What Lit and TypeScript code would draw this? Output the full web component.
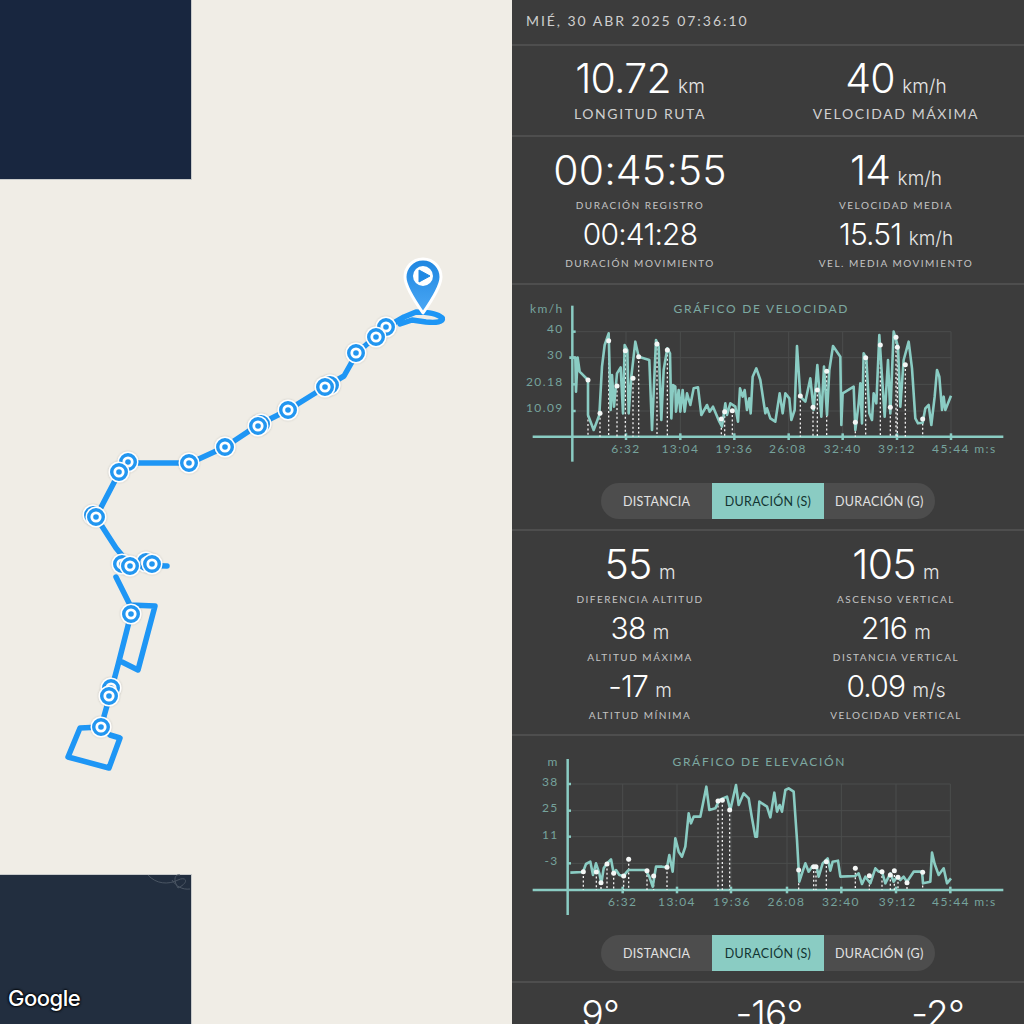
import { LitElement, html, css, svg } from "lit";
import { customElement } from "lit/decorators.js";

type Pt = [number, number];

interface ChartDef {
  title: string;
  titleX: number;
  unit: string;
  unitX: number;
  axisX: number;
  axisY: number;
  yTicks: { label: string; y: number; labelY: number }[];
  labelRight: number;
  xTicks: number[];
  xLabels: { label: string; x: number }[];
  xLabelY: number;
  titleY: number;
  line: Pt[];
  dots: Pt[];
}

// chart points are in 3x crop coordinates, divided by 3 when drawn
const SPEED: ChartDef = {
  title: "GRÁFICO DE VELOCIDAD",
  titleX: 748,
  titleY: 58,
  unit: "km/h",
  unitX: 155,
  axisX: 181,
  axisY: 440,
  labelRight: 155,
  yTicks: [
    { label: "40", y: 125, labelY: 117 },
    { label: "30", y: 203, labelY: 195 },
    { label: "20.18", y: 283, labelY: 275 },
    { label: "10.09", y: 363, labelY: 355 },
  ],
  xTicks: [342, 505, 667, 830, 992, 1155, 1317],
  xLabels: [
    { label: "6:32", x: 342 },
    { label: "13:04", x: 505 },
    { label: "19:36", x: 667 },
    { label: "26:08", x: 828 },
    { label: "32:40", x: 992 },
    { label: "39:12", x: 1155 },
    { label: "45:44 m:s", x: 1357 },
  ],
  xLabelY: 477,
  line: [
    [172, 203], [190, 203], [192, 305], [197, 203], [203, 245], [228, 270], [228, 375], [245, 420], [262, 375],
    [270, 230], [278, 165], [290, 130], [296, 360], [300, 255], [306, 350], [315, 250], [326, 232], [333, 370],
    [338, 165], [346, 180], [350, 370], [358, 260], [370, 155], [380, 200], [412, 210], [420, 420], [432, 150],
    [440, 170], [448, 390], [455, 240], [466, 175], [474, 190], [478, 385], [483, 285], [490, 290], [492, 365],
    [500, 300], [505, 365], [512, 300], [518, 365], [525, 310], [535, 345], [545, 295], [558, 292], [568, 375],
    [585, 345], [593, 365], [603, 350], [622, 395], [630, 410], [640, 340], [645, 375], [655, 340], [670, 350],
    [678, 395], [684, 295], [692, 320], [698, 300], [705, 360], [712, 325], [716, 370], [722, 260], [733, 235],
    [745, 270], [760, 370], [765, 355], [775, 385], [790, 395], [803, 310], [812, 370], [820, 310], [832, 325],
    [838, 390], [848, 360], [855, 168], [865, 320], [880, 335], [895, 265], [905, 360], [916, 225], [928, 380],
    [936, 230], [945, 375], [952, 240], [963, 168], [985, 200], [988, 405], [992, 310], [1025, 290], [1030, 420],
    [1040, 340], [1045, 280], [1050, 400], [1055, 190], [1063, 205], [1072, 370], [1080, 390], [1085, 310],
    [1093, 340], [1102, 135], [1110, 260], [1118, 380], [1128, 210], [1135, 370], [1145, 125], [1158, 170],
    [1165, 350], [1175, 210], [1190, 155], [1200, 235], [1210, 385], [1218, 400], [1232, 398], [1240, 355],
    [1250, 345], [1258, 405], [1268, 320], [1275, 240], [1282, 260], [1290, 360], [1295, 320], [1300, 360],
    [1317, 317],
  ],
  dots: [
    [228, 270], [264, 370], [290, 152], [315, 288], [340, 182], [363, 265], [380, 200], [435, 162], [466, 180],
    [628, 387], [638, 365], [661, 362], [865, 318], [903, 352], [916, 300], [944, 244], [1030, 397], [1061, 203],
    [1105, 165], [1135, 352], [1152, 142], [1156, 172], [1180, 224], [1232, 387],
  ],
};

const ELEVATION: ChartDef = {
  title: "GRÁFICO DE ELEVACIÓN",
  titleX: 742,
  titleY: 66,
  unit: "m",
  unitX: 140,
  axisX: 167,
  axisY: 450,
  labelRight: 140,
  yTicks: [
    { label: "38", y: 132, labelY: 125 },
    { label: "25", y: 212, labelY: 205 },
    { label: "11", y: 290, labelY: 285 },
    { label: "-3", y: 370, labelY: 363 },
  ],
  xTicks: [332, 495, 657, 825, 988, 1152, 1315],
  xLabels: [
    { label: "6:32", x: 332 },
    { label: "13:04", x: 495 },
    { label: "19:36", x: 660 },
    { label: "26:08", x: 823 },
    { label: "32:40", x: 987 },
    { label: "39:12", x: 1157 },
    { label: "45:44 m:s", x: 1357 },
  ],
  xLabelY: 485,
  line: [
    [175, 398], [213, 396], [222, 372], [235, 365], [243, 405], [252, 370], [262, 400], [268, 430], [275, 385],
    [285, 370], [297, 358], [305, 400], [312, 390], [322, 405], [335, 408], [345, 395], [350, 390], [370, 390],
    [400, 390], [412, 410], [422, 440], [432, 380], [450, 380], [465, 382], [472, 345], [482, 395], [490, 295],
    [500, 335], [510, 350], [520, 320], [530, 220], [537, 250], [545, 230], [565, 230], [583, 140], [592, 210],
    [610, 205], [622, 180], [645, 170], [655, 210], [672, 135], [680, 195], [695, 160], [710, 175], [720, 235],
    [730, 290], [735, 290], [742, 185], [765, 200], [775, 232], [787, 158], [795, 215], [803, 195], [810, 215],
    [820, 150], [830, 145], [845, 155], [855, 300], [862, 425], [870, 400], [880, 370], [890, 395], [900, 380],
    [915, 385], [920, 410], [932, 370], [947, 355], [955, 392], [962, 365], [978, 362], [985, 410], [1030, 408],
    [1040, 400], [1050, 432], [1060, 410], [1075, 430], [1090, 385], [1100, 395], [1110, 395], [1120, 430],
    [1135, 400], [1145, 425], [1155, 410], [1165, 420], [1175, 410], [1185, 425], [1205, 395], [1230, 395],
    [1233, 430], [1255, 425], [1260, 338], [1268, 372], [1280, 405], [1295, 385], [1305, 430], [1317, 415],
  ],
  dots: [
    [214, 395], [253, 396], [267, 428], [285, 372], [305, 400], [335, 408], [350, 358], [405, 392], [425, 408],
    [465, 382], [618, 183], [631, 181], [653, 210], [860, 390], [905, 380], [912, 380], [943, 365], [1030, 385],
    [1072, 407], [1110, 395], [1135, 405], [1147, 392], [1158, 412], [1185, 428], [1232, 397],
  ],
};

const ROUTES = [
  "M442 318 C438 314 428 312 416 312 L404 317 L385 328 L357 353 L344 376 L325 387 L288 410 L258 425 L225 447 L190 463 L128 463",
  "M442 318 C444 322 436 323 426 322 L412 320 L400 324",
  "M128 463 L120 471 L96 517 L116 548 L130 565 L167 566",
  "M116 577 L130 605 L155 606 L138 670 L122 662",
  "M131 614 L118 665 L110 695 L101 727",
  "M101 727 L80 728 L68 757 L109 768 L120 738 L110 735",
];

const MARKERS: Pt[] = [
  [101, 727], [111, 688], [109, 696], [131, 614], [122, 564], [146, 562], [152, 564], [130, 566], [93, 515], [96, 517],
  [128, 462], [119, 472], [189, 463], [225, 447], [261, 424], [258, 426], [288, 410], [330, 385], [325, 387], [356, 353],
  [386, 327], [376, 337],
];

@customElement("app-root")
export class AppRoot extends LitElement {
  static styles = css`
    :host {
      display: flex;
      width: 1024px;
      height: 1024px;
      overflow: hidden;
      background: #3c3c3c;
      font-family: Lato, "Open Sans", sans-serif;
      color: #fff;
    }

    .map {
      position: relative;
      flex: 0 0 512px;
      height: 1024px;
      background: #f0ede6;
    }

    .map svg {
      display: block;
    }

    .google {
      position: absolute;
      left: 8px;
      top: 984px;
      font-family: Inter, sans-serif;
      font-size: 22px;
      line-height: 28px;
      font-weight: 500;
      letter-spacing: -0.5px;
      color: #fff;
      text-shadow: 0 0 2px #000, 0 0 2px #000, 0 0 3px #000;
    }

    .panel {
      flex: 0 0 512px;
      height: 1024px;
      overflow: hidden;
      background: #3c3c3c;
    }

    .date {
      height: 44px;
      padding: 12px 0 0 14px;
      box-sizing: border-box;
      font-size: 14px;
      line-height: 17px;
      letter-spacing: 1.95px;
      color: #cfcfcf;
    }

    .section {
      border-top: 2px solid #4e4e4e;
    }

    .stats {
      display: grid;
      grid-template-columns: 1fr 1fr;
      align-content: start;
      justify-items: center;
      text-align: center;
    }

    .stats-a {
      height: 91px;
      box-sizing: border-box;
      padding-top: 10px;
    }

    .stats-b {
      height: 148px;
      box-sizing: border-box;
      padding-top: 11px;
    }

    .stats-c {
      height: 205px;
      box-sizing: border-box;
      padding-top: 11px;
    }

    .stat {
      display: flex;
      flex-direction: column;
      align-items: center;
    }

    .value {
      display: block;
      height: 44px;
      font-family: Inter, sans-serif;
      font-weight: 300;
      font-size: 41px;
      line-height: 44px;
      letter-spacing: -0.8px;
      white-space: nowrap;
      color: #fff;
    }

    .value small {
      font-size: 19px;
      line-height: 1;
      letter-spacing: 0;
      margin-left: 2px;
      color: #e6e6e6;
    }

    .stat.wide .value {
      letter-spacing: 0.1px;
    }

    .stat.minor .value {
      height: 32px;
      font-size: 30px;
      line-height: 32px;
    }

    .label {
      margin-top: 5px;
      height: 16px;
      font-size: 10px;
      line-height: 16px;
      letter-spacing: 1.5px;
      white-space: nowrap;
      color: #c4c4c4;
    }

    .stat.large-label .label {
      margin-top: 6px;
      font-size: 14px;
      letter-spacing: 1.6px;
      color: #d0d0d0;
    }

    .stat.minor {
      margin-top: 5px;
    }

    .chart {
      box-sizing: border-box;
      display: flex;
      flex-direction: column;
      align-items: center;
    }

    .chart svg {
      display: block;
    }

    .chart-a {
      height: 246px;
      padding-top: 5px;
    }

    .chart-b {
      height: 247px;
      padding-top: 4px;
    }

    .chart text {
      font-family: Lato, sans-serif;
      font-size: 12px;
      letter-spacing: 1.4px;
      fill: #76a39c;
    }

    .chart .chart-title {
      letter-spacing: 1.7px;
      fill: #7da9a2;
    }

    .grid-line {
      stroke: #4b4d4c;
      stroke-width: 1;
    }

    .axis {
      stroke: #8accc3;
      stroke-width: 2.5;
    }

    .trace {
      fill: none;
      stroke: #8accc3;
      stroke-width: 2.6;
      stroke-linejoin: round;
    }

    .drop {
      stroke: #f2f2f2;
      stroke-width: 1.3;
      stroke-dasharray: 2 2.4;
    }

    .dot {
      fill: #f4f7f6;
    }

    .toggle {
      display: grid;
      grid-template-columns: repeat(3, 1fr);
      width: 334px;
      height: 36px;
      margin-top: 13px;
      border-radius: 18px;
      overflow: hidden;
      background: #4d4d4d;
      font-size: 12.5px;
      letter-spacing: 0.3px;
      color: #e2e2e2;
    }

    .chart-b .toggle {
      margin-top: 15px;
    }

    .toggle div {
      display: flex;
      align-items: center;
      justify-content: center;
    }

    .toggle .active {
      background: #8accc3;
      color: #123432;
    }

    .angles {
      display: grid;
      grid-template-columns: repeat(3, 1fr);
      padding: 9px 2px 0 4px;
      text-align: center;
      font-family: Inter, sans-serif;
      font-weight: 300;
      font-size: 37px;
      line-height: 44px;
      letter-spacing: -0.8px;
    }
  `;

  private renderMap() {
    return html`
      <svg width="512" height="1024" viewBox="0 0 512 1024">
        <defs>
          <linearGradient id="pin" x1="0" y1="0" x2="0" y2="1">
            <stop offset="0" stop-color="#1f86e0"></stop>
            <stop offset="1" stop-color="#4ba8f5"></stop>
          </linearGradient>
          <filter id="soft" x="-30%" y="-30%" width="160%" height="160%">
            <feDropShadow dx="0" dy="0" stdDeviation="1" flood-color="#000" flood-opacity="0.2"></feDropShadow>
          </filter>
        </defs>
        <rect x="0" y="0" width="192" height="180" fill="#c9cbcb"></rect>
        <rect x="0" y="0" width="191" height="179" fill="#18263f"></rect>
        <rect x="0" y="874" width="192" height="150" fill="#c9cbcb"></rect>
        <rect x="0" y="875" width="191" height="149" fill="#222e3f"></rect>
        <path
          d="M148 875 C156 884 168 885 178 880 C186 876 190 882 178 888 C172 878 176 874 180 875 M190 889 C182 890 176 886 172 880"
          fill="none"
          stroke="#4a5563"
          stroke-width="1"
        ></path>
        ${ROUTES.map(
          (d) => svg`<path d=${d} fill="none" stroke="#1e96f5" stroke-width="5.500" stroke-linejoin="round" stroke-linecap="round"></path>`,
        )}
        ${MARKERS.map(
          ([x, y]) => svg`
            <g filter="url(#soft)">
              <circle cx=${x} cy=${y} r="10.500" fill="#fff"></circle>
              <circle cx=${x} cy=${y} r="7.300" fill="none" stroke="#2296f0" stroke-width="3.400"></circle>
              <circle cx=${x} cy=${y} r="2.800" fill="#2296f0"></circle>
            </g>
          `,
        )}
        <path
          d="M423 259 C412 259 405 268 405 277 C405 287 416 303 423 313 C430 303 441 287 441 277 C441 268 434 259 423 259 Z"
          fill="url(#pin)"
          stroke="#fff"
          stroke-width="3"
          stroke-linejoin="round"
        ></path>
        <circle cx="423" cy="276" r="10" fill="#fff"></circle>
        <path d="M419 270 L430 276 L419 282 Z" fill="#2189e3" stroke="#2189e3" stroke-width="1" stroke-linejoin="round"></path>
      </svg>
      <div class="google">Google</div>
    `;
  }

  private renderChart(c: ChartDef) {
    const s = (n: number) => n / 3;
    const right = c.xTicks[c.xTicks.length - 1];
    const top = c.yTicks[0].y;
    return html`
      <svg width="512" height="180" viewBox="0 0 512 180">
        ${c.yTicks.map(
          (t) => svg`<line class="grid-line" x1=${s(c.axisX)} x2=${s(right)} y1=${s(t.y)} y2=${s(t.y)}></line>`,
        )}
        ${c.xTicks.map(
          (x) => svg`<line class="grid-line" x1=${s(x)} x2=${s(x)} y1=${s(top)} y2=${s(c.axisY)}></line>`,
        )}
        <line class="axis" x1=${s(62)} x2=${s(1474)} y1=${s(c.axisY)} y2=${s(c.axisY)}></line>
        <line class="axis" x1=${s(c.axisX)} x2=${s(c.axisX)} y1=${s(c.axisY - 393)} y2=${s(c.axisY + 75)}></line>
        ${c.yTicks.map(
          (t) => svg`<line class="axis" x1=${s(c.axisX)} x2=${s(c.axisX + 10)} y1=${s(t.y)} y2=${s(t.y)}></line>`,
        )}
        ${c.xTicks.map(
          (x) => svg`<line class="axis" x1=${s(x)} x2=${s(x)} y1=${s(c.axisY - 10)} y2=${s(c.axisY + 10)}></line>`,
        )}
        ${c.dots.map(
          ([x, y]) => svg`<line class="drop" x1=${s(x)} x2=${s(x)} y1=${s(y)} y2=${s(c.axisY)}></line>`,
        )}
        <polyline class="trace" points=${c.line.map(([x, y]) => `${s(x)},${s(y)}`).join(" ")}></polyline>
        ${c.dots.map(([x, y]) => svg`<circle class="dot" cx=${s(x)} cy=${s(y)} r="2.500"></circle>`)}
        <text class="chart-title" x=${s(c.titleX)} y=${s(c.titleY) + 4} text-anchor="middle">${c.title}</text>
        <text x=${s(c.unitX)} y=${s(c.titleY) + 4} text-anchor="end">${c.unit}</text>
        ${c.yTicks.map(
          (t) => svg`<text x=${s(c.labelRight)} y=${s(t.labelY) + 4} text-anchor="end">${t.label}</text>`,
        )}
        ${c.xLabels.map(
          (t) => svg`<text x=${s(t.x)} y=${s(c.xLabelY) + 4} text-anchor="middle">${t.label}</text>`,
        )}
      </svg>
      <div class="toggle">
        <div>DISTANCIA</div>
        <div class="active">DURACIÓN (S)</div>
        <div>DURACIÓN (G)</div>
      </div>
    `;
  }

  private stat(value: string, unit: string, label: string, cls = "") {
    return html`
      <div class="stat ${cls}">
        <span class="value">${value}${unit ? html`<small> ${unit}</small>` : ""}</span>
        <span class="label">${label}</span>
      </div>
    `;
  }

  render() {
    return html`
      <div class="map">${this.renderMap()}</div>
      <div class="panel">
        <div class="date">MIÉ, 30 ABR 2025 07:36:10</div>
        <div class="section stats stats-a">
          ${this.stat("10.72", "km", "LONGITUD RUTA", "large-label")}
          ${this.stat("40", "km/h", "VELOCIDAD MÁXIMA", "large-label")}
        </div>
        <div class="section stats stats-b">
          ${this.stat("00:45:55", "", "DURACIÓN REGISTRO", "wide")}
          ${this.stat("14", "km/h", "VELOCIDAD MEDIA")}
          ${this.stat("00:41:28", "", "DURACIÓN MOVIMIENTO", "minor")}
          ${this.stat("15.51", "km/h", "VEL. MEDIA MOVIMIENTO", "minor")}
        </div>
        <div class="section chart chart-a">${this.renderChart(SPEED)}</div>
        <div class="section stats stats-c">
          ${this.stat("55", "m", "DIFERENCIA ALTITUD")}
          ${this.stat("105", "m", "ASCENSO VERTICAL")}
          ${this.stat("38", "m", "ALTITUD MÁXIMA", "minor")}
          ${this.stat("216", "m", "DISTANCIA VERTICAL", "minor")}
          ${this.stat("-17", "m", "ALTITUD MÍNIMA", "minor")}
          ${this.stat("0.09", "m/s", "VELOCIDAD VERTICAL", "minor")}
        </div>
        <div class="section chart chart-b">${this.renderChart(ELEVATION)}</div>
        <div class="section angles">
          <span>9°</span>
          <span>-16°</span>
          <span>-2°</span>
        </div>
      </div>
    `;
  }
}
